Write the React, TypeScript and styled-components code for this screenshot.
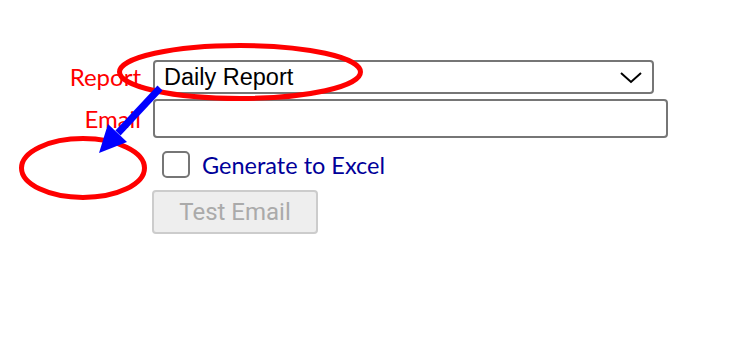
import styled, { createGlobalStyle } from "styled-components"

const GlobalStyle = createGlobalStyle`
	html, body {
		margin: 0;
		padding: 0;
		background: #ffffff;
	}
`

const Page = styled.div`
	position: relative;
	width: 744px;
	height: 337px;
	overflow: hidden;
	background: #ffffff;
`

const Form = styled.div`
	display: grid;
	grid-template-columns: 141px auto;
	column-gap: 12px;
	row-gap: 5px;
	padding-top: 60px;
	align-items: center;
`

const Label = styled.label`
	font-family: "Lato", sans-serif;
	font-size: 24px;
	line-height: 28px;
	color: #ff0000;
	text-align: right;
`

const SelectWrap = styled.div`
	position: relative;
	width: 501px;
	height: 34px;
`

const Select = styled.select`
	appearance: none;
	width: 100%;
	height: 100%;
	box-sizing: border-box;
	border: 2px solid #767676;
	border-radius: 4px;
	background: #ffffff;
	padding: 0 0 0 9px;
	font-family: "Liberation Sans", Arial, sans-serif;
	font-size: 23.5px;
	color: #000000;
	outline: none;
`

const Chevron = styled.svg`
	position: absolute;
	right: 12px;
	top: 12px;
	pointer-events: none;
`

const Input = styled.input`
	width: 515px;
	height: 39px;
	box-sizing: border-box;
	border: 2px solid #767676;
	border-radius: 4px;
	font-size: 20px;
	outline: none;
`

const Spacer = styled.div``

const CheckRow = styled.label`
	display: flex;
	align-items: center;
	gap: 12px;
	height: 27px;
	margin-top: 8px;
	padding-left: 9px;
	font-family: "Lato", sans-serif;
	font-size: 23.5px;
	color: #000099;
`

const Box = styled.span`
	display: inline-block;
	width: 28px;
	height: 27px;
	box-sizing: border-box;
	border: 2px solid #767676;
	border-radius: 5px;
	background: #ffffff;
`

const Button = styled.button`
	display: block;
	width: 166px;
	height: 44px;
	margin-top: 7px;
	margin-left: -1px;
	border: 2px solid #cccccc;
	border-radius: 4px;
	background: #eeeeee;
	color: #aaaaaa;
	font-family: "Roboto", sans-serif;
	font-size: 24px;
	padding: 0;
`

const Annotations = styled.svg`
	position: absolute;
	left: 0;
	top: 0;
	pointer-events: none;
`

const App = () => {
	return (
		<Page>
			<GlobalStyle />
			<Form>
				<Label>Report</Label>
				<SelectWrap>
					<Select defaultValue="daily">
						<option value="daily">Daily Report</option>
					</Select>
					<Chevron width="22" height="12" viewBox="0 0 22 12">
						<path d="M1 1 L11 10 L21 1" fill="none" stroke="#000" strokeWidth="2" />
					</Chevron>
				</SelectWrap>
				<Label>Email</Label>
				<Input type="text" />
				<Spacer />
				<CheckRow>
					<Box />
					Generate to Excel
				</CheckRow>
				<Spacer />
				<div>
					<Button disabled>Test Email</Button>
				</div>
			</Form>
			<Annotations width="744" height="337" viewBox="0 0 744 337">
				<ellipse cx="240" cy="72" rx="120.5" ry="26.5" fill="none" stroke="#ff0000" strokeWidth="5" />
				<ellipse cx="83" cy="168" rx="61.5" ry="29.5" fill="none" stroke="#ff0000" strokeWidth="5" />
				<line x1="160" y1="88" x2="118" y2="133" stroke="#0000ff" strokeWidth="7" />
				<polygon points="99,153 108,124 127,142" fill="#0000ff" />
			</Annotations>
		</Page>
	)
}

export default App
